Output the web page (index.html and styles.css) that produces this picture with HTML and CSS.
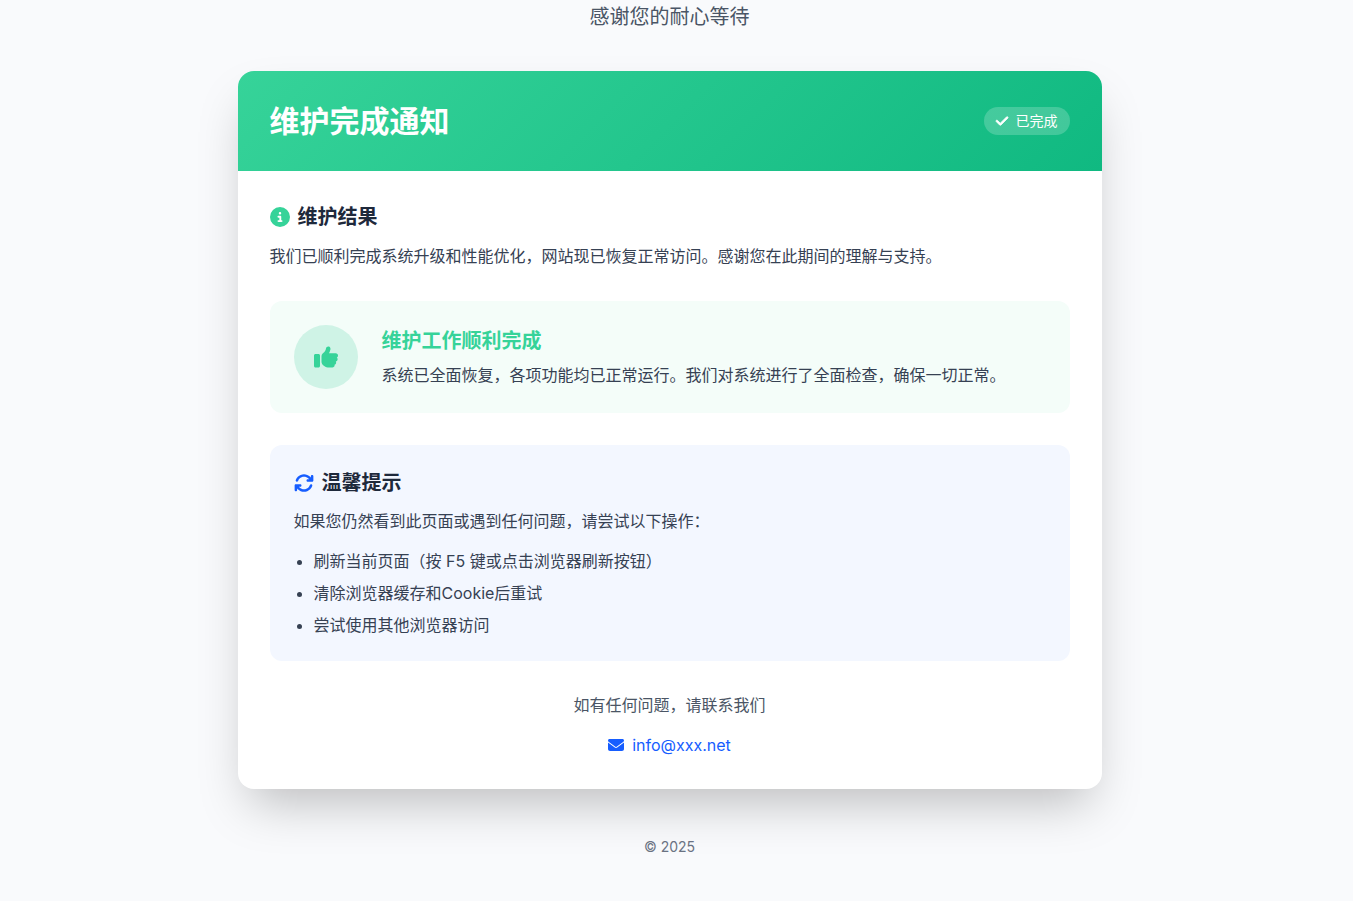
FILE: index.html
```
<!DOCTYPE html>
<html lang="zh-CN">
<head>
	<meta charset="utf-8">
	<meta name="viewport" content="width=device-width, initial-scale=1.0">
	<title>维护完成通知</title>
	<link rel="stylesheet" href="styles.css">
</head>
<body>
<div class="container">
	<p class="tagline">感谢您的耐心等待</p>

	<main class="card">
		<header class="card-header">
			<h1>维护完成通知</h1>
			<span class="badge">
				<svg class="icon-check" viewBox="0 0 448 512" aria-hidden="true"><path d="M438.6 105.4c12.5 12.5 12.5 32.8 0 45.3l-256 256c-12.5 12.5-32.8 12.5-45.3 0l-128-128c-12.5-12.5-12.5-32.8 0-45.3s32.8-12.5 45.3 0L160 338.7 393.4 105.4c12.5-12.5 32.8-12.5 45.3 0z"/></svg>
				已完成
			</span>
		</header>

		<div class="card-body">
			<section>
				<h2>
					<svg class="icon-success" viewBox="0 0 512 512" aria-hidden="true"><path d="M256 512A256 256 0 1 0 256 0a256 256 0 1 0 0 512zM216 336h24V272H216c-13.3 0-24-10.7-24-24s10.7-24 24-24h48c13.3 0 24 10.7 24 24v88h8c13.3 0 24 10.7 24 24s-10.7 24-24 24H216c-13.3 0-24-10.7-24-24s10.7-24 24-24zm40-208a32 32 0 1 1 0 64 32 32 0 1 1 0-64z"/></svg>
					维护结果
				</h2>
				<p class="lead">我们已顺利完成系统升级和性能优化，网站现已恢复正常访问。感谢您在此期间的理解与支持。</p>
			</section>

			<section class="panel result">
				<div class="result-icon">
					<svg viewBox="0 0 512 512" aria-hidden="true"><path d="M313.4 32.9c26 5.2 42.9 30.5 37.7 56.5l-2.3 11.4c-5.3 26.7-15.1 52.1-28.8 75.2H464c26.5 0 48 21.5 48 48c0 18.5-10.5 34.6-25.9 42.6C497 275.4 504 288.9 504 304c0 23.4-16.8 42.9-38.9 47.1c4.4 7.3 6.9 15.8 6.9 24.9c0 21.3-13.9 39.4-33.1 45.6c.7 3.3 1.1 6.8 1.1 10.4c0 26.5-21.5 48-48 48H294.5c-19 0-37.5-5.6-53.3-16.1l-38.5-25.7C176 420.4 160 390.4 160 358.3V320 272 247.1c0-29.2 13.3-56.7 36-75l7.4-5.9c26.5-21.2 44.6-51 51.2-84.2l2.3-11.4c5.2-26 30.5-42.9 56.5-37.7zM32 192H96c17.7 0 32 14.3 32 32V448c0 17.7-14.3 32-32 32H32c-17.7 0-32-14.3-32-32V224c0-17.7 14.3-32 32-32z"/></svg>
				</div>
				<div>
					<h3>维护工作顺利完成</h3>
					<p>系统已全面恢复，各项功能均已正常运行。我们对系统进行了全面检查，确保一切正常。</p>
				</div>
			</section>

			<section class="panel tips">
				<h2>
					<svg class="icon-primary" viewBox="0 0 512 512" aria-hidden="true"><path d="M105.1 202.6c7.7-21.8 20.2-42.3 37.8-59.8c62.5-62.5 163.8-62.5 226.3 0L386.3 160H352c-17.7 0-32 14.3-32 32s14.3 32 32 32H463.5h.4c17.7 0 32-14.3 32-32V80c0-17.7-14.3-32-32-32s-32 14.3-32 32v35.2L414.4 97.6c-87.5-87.5-229.3-87.5-316.8 0C73.2 122 55.6 150.7 44.8 181.4c-5.9 16.7 2.9 34.9 19.5 40.8s34.9-2.9 40.8-19.5zM39 289.3c-5 1.5-9.8 4.2-13.7 8.2c-4 4-6.7 8.8-8.1 14c-.3 1.2-.6 2.5-.8 3.8c-.3 1.7-.4 3.4-.4 5.1V432c0 17.7 14.3 32 32 32s32-14.3 32-32V396.9l17.6 17.5 0 0c87.5 87.4 229.3 87.4 316.7 0c24.4-24.4 42.1-53.1 52.9-83.7c5.9-16.7-2.9-34.9-19.5-40.8s-34.9 2.9-40.8 19.5c-7.7 21.8-20.2 42.3-37.8 59.8c-62.5 62.5-163.8 62.5-226.3 0l-.1-.1L125.6 352H160c17.7 0 32-14.3 32-32s-14.3-32-32-32H48.4c-1.6 0-3.2 .1-4.8 .3s-3.1 .5-4.6 1z"/></svg>
					温馨提示
				</h2>
				<p>如果您仍然看到此页面或遇到任何问题，请尝试以下操作：</p>
				<ul>
					<li>刷新当前页面（按 F5 键或点击浏览器刷新按钮）</li>
					<li>清除浏览器缓存和Cookie后重试</li>
					<li>尝试使用其他浏览器访问</li>
				</ul>
			</section>

			<section class="contact">
				<p>如有任何问题，请联系我们</p>
				<a href="mailto:info@xxx.net">
					<svg viewBox="0 0 512 512" aria-hidden="true"><path d="M48 64C21.5 64 0 85.5 0 112c0 15.1 7.1 29.3 19.2 38.4L236.8 313.6c11.4 8.5 27 8.5 38.4 0L492.8 150.4c12.1-9.1 19.2-23.3 19.2-38.4c0-26.5-21.5-48-48-48H48zM0 176V384c0 35.3 28.7 64 64 64H448c35.3 0 64-28.7 64-64V176L294.4 339.2c-22.8 17.1-54 17.1-76.8 0L0 176z"/></svg>
					info@xxx.net
				</a>
			</section>
		</div>
	</main>

	<footer>© 2025</footer>
</div>
</body>
</html>
```
FILE: styles.css
```
:root {
	--primary: #165dff;
	--success: #36d399;
	--dark: #1e293b;
	--text: #364153;
	--muted: #4a5565;
}

* { box-sizing: border-box; margin: 0; padding: 0 }

body {
	padding-right: 14px; /* room for the scrollbar */
	background: #f9fafc;
	color: var(--text);
	font-family: Inter, "Noto Sans CJK SC", sans-serif;
	font-size: 16px;
	line-height: 24px;
}

svg { display: block; flex: none; fill: currentColor }

.container { max-width: 896px; margin: 0 auto; padding: 3px 16px 40px }
.tagline { margin-bottom: 40px; font-size: 20px; line-height: 28px; text-align: center; color: var(--muted) }

.card { overflow: hidden; border-radius: 16px; background: #fff; box-shadow: 0 25px 50px -12px rgba(0, 0, 0, .25) }
.card-header {
	display: flex;
	align-items: center;
	justify-content: space-between;
	padding: 32px;
	background: linear-gradient(135deg, var(--success), #10b981);
	color: #fff;
}
.card-body { display: flex; flex-direction: column; gap: 32px; padding: 32px }

h1 { font-size: 30px; line-height: 36px; font-weight: 700 }
h2 { display: flex; align-items: center; gap: 8px; margin-bottom: 12px; font-size: 20px; line-height: 28px; font-weight: 700; color: var(--dark) }
h2 svg { width: 20px; height: 20px }
.icon-success { color: var(--success) }
.icon-primary { color: var(--primary) }

.badge { display: flex; align-items: center; gap: 8px; padding: 4px 12px; border-radius: 14px; background: rgba(255, 255, 255, .2); font-size: 14px; line-height: 20px }
.icon-check { width: 12px; height: 14px; overflow: visible; stroke: currentColor; stroke-width: 32 }

.lead { line-height: 26px }

.panel { padding: 24px; border-radius: 12px }
.result { display: flex; align-items: center; gap: 24px; background: #f4fdf9 }
.result-icon { display: flex; flex: none; align-items: center; justify-content: center; width: 64px; height: 64px; border-radius: 50%; background: #cff3e6; color: var(--success) }
.result-icon svg { width: 24px; height: 24px }
.result h3 { margin-bottom: 8px; font-size: 20px; line-height: 28px; font-weight: 700; color: var(--success) }

.tips { background: #f3f7ff }
.tips ul { margin-top: 16px; padding-left: 20px }
.tips li + li { margin-top: 8px }

.contact { text-align: center; color: var(--muted) }
.contact a { display: flex; align-items: center; justify-content: center; gap: 8px; width: fit-content; margin: 16px auto 0; color: var(--primary); text-decoration: none }
.contact a:hover { text-decoration: underline }
.contact svg { width: 16px; height: 16px }

footer { margin-top: 48px; font-size: 14px; line-height: 20px; text-align: center; color: #6a7282 }
```
